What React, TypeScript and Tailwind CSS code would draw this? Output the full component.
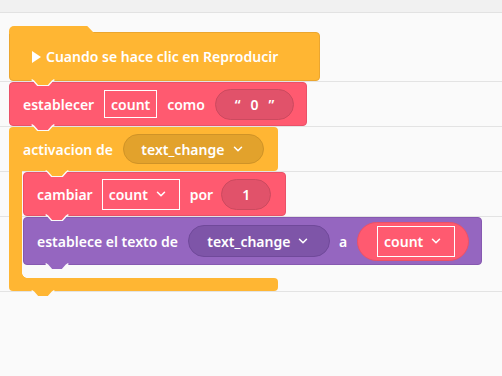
import { ChevronDown } from 'lucide-react';

// little downward connector under a block, with a light rim like the gap between blocks
function Tab({ color, left }: { color: string; left: string }) {
  return (
    <div
      className={`pointer-events-none absolute top-[calc(100%-1px)] z-10 ${left} [filter:drop-shadow(1px_0_0_#fafafa)_drop-shadow(-1px_0_0_#fafafa)_drop-shadow(0_1px_0_#fafafa)]`}
    >
      <div className={`h-[6px] w-[22px] ${color} [clip-path:polygon(0_0,100%_0,90%_25%,72%_100%,28%_100%,10%_25%)]`} />
    </div>
  );
}

function VarBox({ label, width, dropdown }: { label: string; width: string; dropdown?: boolean }) {
  return (
    <div className={`flex h-[31px] items-center border border-white pl-[6px] ${width}`}>
      <span>{label}</span>
      {dropdown && <ChevronDown className="ml-[6px] h-[14px] w-[14px]" strokeWidth={2.6} />}
    </div>
  );
}

export default function App() {
  return (
    <div className="relative h-[376px] w-[502px] overflow-hidden bg-[#fafafa] font-['Noto_Sans',sans-serif] text-[14px] font-semibold text-white">
      <div className="h-[13px] border-b border-[#e2e2e2] bg-[#f1f1f1]" />

      {/* workspace grid lines */}
      <div className="absolute left-0 right-0 top-[81px] h-px bg-[#e3e3e3]" />
      <div className="absolute left-0 right-0 top-[126px] h-px bg-[#e3e3e3]" />
      <div className="absolute left-0 right-0 top-[171px] h-px bg-[#e3e3e3]" />
      <div className="absolute left-0 right-0 top-[216px] h-px bg-[#e3e3e3]" />
      <div className="absolute left-0 right-0 top-[291px] h-px bg-[#e3e3e3]" />

      <div className="relative z-10 flex flex-col items-start gap-px pl-[9px] pt-[19px]">
        {/* hat block */}
        <div className="relative flex h-[49px] w-[311px] items-center rounded-[4px] rounded-tl-none border border-[#eba62f] bg-[#ffb633] pl-[22px]">
          <div className="absolute -left-px -top-[7px] h-[8px] w-[86px] rounded-tl-[5px] bg-[#ffb633] [clip-path:polygon(0_0,91%_0,100%_100%,0_100%)]" />
          <span className="mr-[5px] h-0 w-0 border-y-[6px] border-l-[9px] border-y-transparent border-l-white" />
          <span>Cuando se hace clic en Reproducir</span>
          <Tab color="bg-[#ffb633]" left="left-[22px]" />
        </div>

        {/* establecer count como "0" */}
        <div className="relative flex h-[44px] w-[298px] items-center rounded-[4px] border border-[#ea5168] bg-[#ff5a70] pl-[13px]">
          <span>establecer</span>
          <div className="ml-[10px] flex h-[28px] w-[53px] items-center justify-center border border-white">count</div>
          <span className="ml-[10px]">como</span>
          <div className="ml-[10px] flex h-[31px] w-[79px] items-center justify-center gap-[10px] rounded-full border border-[#cc4a5f] bg-[#e1526a]">
            <span>“</span>
            <span>0</span>
            <span>”</span>
          </div>
          <Tab color="bg-[#ff5a70]" left="left-[22px]" />
        </div>

        {/* activacion de text_change */}
        <div className="flex flex-col">
          <div className="relative flex h-[44px] w-[269px] items-center rounded-t-[4px] rounded-br-[4px] bg-[#ffb633] pl-[14px]">
            <span>activacion de</span>
            <div className="ml-[10px] flex h-[30px] w-[141px] items-center justify-center gap-[7px] rounded-full border border-[#cf9327] bg-[#e2a22c]">
              <span>text_change</span>
              <ChevronDown className="h-[14px] w-[14px]" strokeWidth={2.6} />
            </div>
            <Tab color="bg-[#ffb633]" left="left-[37px]" />
          </div>

          <div className="relative flex">
            <div className="w-[13px] bg-[#ffb633]" />
            <div className="absolute bottom-0 left-[13px] h-[5px] w-[5px] bg-[radial-gradient(circle_at_100%_0,transparent_4.5px,#ffb633_5px)]" />
            <div className="ml-px flex flex-col items-start gap-px pb-[13px] pt-px">
              {/* cambiar count por 1 */}
              <div className="relative flex h-[44px] w-[263px] items-center rounded-[4px] border border-[#ea5168] bg-[#ff5a70] pl-[13px]">
                <span>cambiar</span>
                <div className="ml-[9px]">
                  <VarBox label="count" width="w-[78px]" dropdown />
                </div>
                <span className="ml-[10px]">por</span>
                <div className="ml-[8px] flex h-[31px] w-[50px] items-center justify-center rounded-full border border-[#cc4a5f] bg-[#e1526a]">
                  1
                </div>
                <Tab color="bg-[#ff5a70]" left="left-[22px]" />
              </div>

              {/* establece el texto de text_change a count */}
              <div className="relative flex h-[48px] w-[459px] items-center rounded-[4px] border border-[#8659b0] bg-[#9566c0] pl-[13px]">
                <span>establece el texto de</span>
                <div className="ml-[10px] flex h-[32px] w-[142px] items-center justify-center gap-[6px] rounded-full border border-[#70499a] bg-[#7e55a8]">
                  <span>text_change</span>
                  <ChevronDown className="h-[14px] w-[14px]" strokeWidth={2.6} />
                </div>
                <span className="ml-[9px]">a</span>
                <div className="ml-[10px] flex h-[39px] w-[112px] items-center rounded-full border border-[#ea5168] bg-[#ff5a70] pl-[19px]">
                  <VarBox label="count" width="w-[78px]" dropdown />
                </div>
                <Tab color="bg-[#9566c0]" left="left-[22px]" />
              </div>
            </div>
          </div>

          <div className="relative h-[13px] w-[269px] rounded-b-[4px] rounded-tr-[4px] bg-[#ffb633]">
            <Tab color="bg-[#ffb633]" left="left-[23px]" />
          </div>
        </div>
      </div>
    </div>
  );
}
